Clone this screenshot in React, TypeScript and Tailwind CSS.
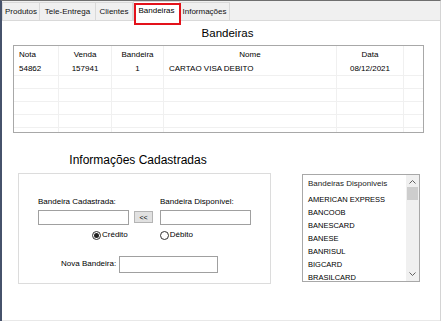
import React from 'react';

const tabs = [
  { label: 'Produtos', w: 'w-[38px]' },
  { label: 'Tele-Entrega', w: 'w-[56px]' },
  { label: 'Clientes', w: 'w-[37px]' },
  { label: 'Bandeiras', w: 'w-[47px]', active: true },
  { label: 'Informações', w: 'w-[50px]' },
];

const bandeiras = [
  'AMERICAN EXPRESS',
  'BANCOOB',
  'BANESCARD',
  'BANESE',
  'BANRISUL',
  'BIGCARD',
  'BRASILCARD',
];

const Radio = ({ checked, label }: { checked?: boolean; label: string }) => (
  <div className="flex items-center gap-[1px]">
    <span className="w-[9px] h-[9px] rounded-full border border-[#333] bg-white flex items-center justify-center">
      {checked && <span className="w-[5px] h-[5px] rounded-full bg-[#222]" />}
    </span>
    <span>{label}</span>
  </div>
);

const Cell = ({ w, align, children }: { w: string; align: string; children?: React.ReactNode }) => (
  <div className={`${w} ${align} h-full flex items-center px-[5px] border-r border-[#f0f0f0] shrink-0`}>{children}</div>
);

export default function App() {
  const rows = [
    { nota: '54862', venda: '157941', band: '1', nome: 'CARTAO VISA DEBITO', data: '08/12/2021' },
    null,
    null,
    null,
    null,
    null,
  ];

  return (
    <div className="relative w-[441px] h-[321px] overflow-hidden bg-white flex flex-col border-l-2 border-l-[#46526b] border-t border-t-[#6f6f6f] border-r border-r-[#d4d4d4] text-black text-[8px] font-['Liberation_Sans',Arial,sans-serif]">
      {/* tab strip */}
      <div className="h-[20px] bg-[#f0f0f0] flex items-end border-b border-[#d9d9d9] shrink-0">
        {tabs.map(t => (
          <div
            key={t.label}
            className={
              t.active
                ? `${t.w} h-[20px] -mb-px bg-white border-x border-t border-[#d9d9d9] flex items-center justify-center pb-[1px]`
                : `${t.w} h-[18px] border-r border-t border-[#d9d9d9] first:border-l flex items-center justify-center text-[#111]`
            }
          >
            {t.label}
          </div>
        ))}
      </div>

      {/* red highlight around active tab */}
      <div className="absolute left-[132px] top-[2px] w-[47px] h-[22px] border-2 border-[#e3121b]" />

      <div className="flex-1 flex flex-col pl-[11px] border-b border-[#e8e8e8]">
        <div className="mt-[5px] h-[14px] text-[11.5px] leading-[14px] text-center pl-[2px]">Bandeiras</div>

        {/* grid */}
        <div className="mt-[5px] w-[411px] h-[88px] border border-[#a8a8a8] overflow-hidden flex flex-col">
          <div className="h-[17px] flex shrink-0">
            <Cell w="w-[45px]" align="justify-start">Nota</Cell>
            <Cell w="w-[53px]" align="justify-center">Venda</Cell>
            <Cell w="w-[52px]" align="justify-center">Bandeira</Cell>
            <Cell w="w-[173px]" align="justify-center">Nome</Cell>
            <Cell w="w-[67px]" align="justify-center">Data</Cell>
            <div className="flex-1" />
          </div>
          {rows.map((r, i) => (
            <div key={i} className="h-[13px] flex shrink-0 border-b border-[#f0f0f0]">
              <Cell w="w-[45px]" align="justify-start">{r?.nota}</Cell>
              <Cell w="w-[53px]" align="justify-center">{r?.venda}</Cell>
              <Cell w="w-[52px]" align="justify-center">{r?.band}</Cell>
              <Cell w="w-[173px]" align="justify-start">{r?.nome}</Cell>
              <Cell w="w-[67px]" align="justify-center">{r?.data}</Cell>
              <div className="flex-1" />
            </div>
          ))}
        </div>

        <div className="flex mt-[20px]">
          {/* left block */}
          <div className="ml-[5px] w-[253px] flex flex-col">
            <div className="h-[14px] text-[12px] leading-[14px] text-center pr-[13px]">Informações Cadastradas</div>
            <div className="mt-[6px] h-[111px] border border-[#dcdcdc] flex flex-col">
              <div className="mt-[23px] flex pl-[19px]">
                <div className="flex flex-col">
                  <span className="h-[10px] leading-[10px]">Bandeira Cadastrada:</span>
                  <div className="mt-[3px] w-[91px] h-[15px] border border-[#a0a0a0] bg-white" />
                </div>
                <div className="ml-[5px] mt-[14px] w-[19px] h-[12px] border border-[#b4b4b4] bg-[#e1e1e1] flex items-center justify-center text-[7px] leading-none">
                  &lt;&lt;
                </div>
                <div className="ml-[7px] flex flex-col">
                  <span className="h-[10px] leading-[10px]">Bandeira Disponível:</span>
                  <div className="mt-[3px] w-[91px] h-[15px] border border-[#a0a0a0] bg-white" />
                </div>
              </div>
              <div className="mt-[4px] flex">
                <div className="ml-[73px]"><Radio checked label="Crédito" /></div>
                <div className="ml-[32px]"><Radio label="Débito" /></div>
              </div>
              <div className="mt-[15px] flex items-center">
                <span className="ml-[42px] w-[58px] -mt-[2px]">Nova Bandeira:</span>
                <div className="w-[99px] h-[17px] border border-[#a0a0a0] bg-white" />
              </div>
            </div>
          </div>

          {/* list */}
          <div className="ml-[31px] mt-[21px] w-[118px] h-[108px] border border-[#a8a8a8] flex">
            <div className="flex-1 flex flex-col pl-[5px] pt-[4px] overflow-hidden">
              <div className="h-[10px] leading-[10px] text-[#222]">Bandeiras Disponiveis</div>
              <div className="mt-[4px] flex flex-col">
                {bandeiras.map(b => (
                  <div key={b} className="h-[13px] leading-[13px] text-[7.5px]">{b}</div>
                ))}
              </div>
            </div>
            <div className="w-[13px] bg-[#f0f0f0] flex flex-col items-center">
              <svg className="mt-[5px]" width="7" height="4" viewBox="0 0 7 4">
                <path d="M0.5 3.5 L3.5 0.5 L6.5 3.5" fill="none" stroke="#606060" strokeWidth="1" />
              </svg>
              <div className="mt-[3px] w-[11px] h-[13px] bg-[#cdcdcd]" />
              <div className="flex-1" />
              <svg className="mb-[5px]" width="7" height="4" viewBox="0 0 7 4">
                <path d="M0.5 0.5 L3.5 3.5 L6.5 0.5" fill="none" stroke="#606060" strokeWidth="1" />
              </svg>
            </div>
          </div>
        </div>
      </div>
    </div>
  );
}
